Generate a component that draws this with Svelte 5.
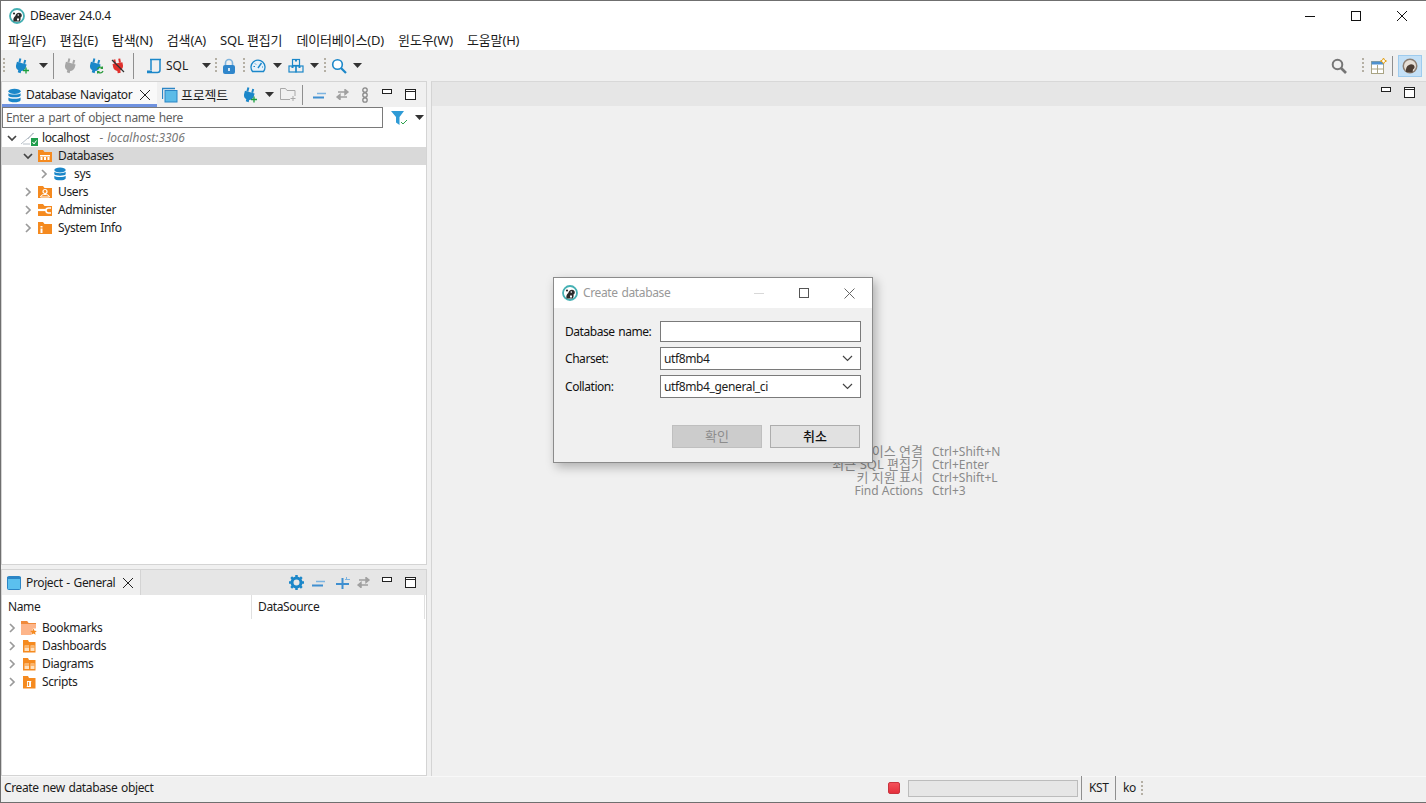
<script>
  const menus = ['파일(F)', '편집(E)', '탐색(N)', '검색(A)', 'SQL 편집기', '데이터베이스(D)', '윈도우(W)', '도움말(H)'];
  const hints = [
    { label: '새 데이터베이스 연결', key: 'Ctrl+Shift+N', latin: false },
    { label: '최근 SQL 편집기', key: 'Ctrl+Enter', latin: false },
    { label: '키 지원 표시', key: 'Ctrl+Shift+L', latin: false },
    { label: 'Find Actions', key: 'Ctrl+3', latin: true }
  ];
</script>

{#snippet chev(open)}
  <svg class="chev" width="10" height="10" viewBox="0 0 10 10">
    {#if open}
      <path d="M1 3l4 4 4-4" fill="none" stroke="#444" stroke-width="1.7" />
    {:else}
      <path d="M3 1l4 4-4 4" fill="none" stroke="#9a9a9a" stroke-width="1.7" />
    {/if}
  </svg>
{/snippet}

{#snippet arrow()}
  <svg class="arrow" width="9" height="5" viewBox="0 0 9 5"><path d="M0 0h9L4.500 5z" fill="#333" /></svg>
{/snippet}

{#snippet logo(size)}
  <svg width={size} height={size} viewBox="0 0 16 16">
    <circle cx="8" cy="8" r="7" fill="#fff" stroke="#45b0b3" stroke-width="1.800" />
    <path d="M4.500 13.500c-.5-2.500.2-4.500 1.800-5.500.3-1.700 1.700-3.200 3.700-3.200 1.600 0 2.800 1.100 2.800 2.700 0 1-.6 1.800-1.300 2 .3 1.500 0 2.900-.8 4z" fill="#2b2b2b" />
    <circle cx="5" cy="5.500" r="1.100" fill="#2b2b2b" />
    <circle cx="9.300" cy="7" r=".8" fill="#fff" />
    <path d="M8 10.500h2v2H8z" fill="#fff" />
  </svg>
{/snippet}

{#snippet plug(color, badge)}
  <svg width="16" height="16" viewBox="0 0 16 16">
    <g transform="rotate(15 7 8)">
      <path d="M4.500 1v4M9.500 1v4" stroke={color} stroke-width="2" />
      <path d="M2 5h10v3.500a5 5 0 0 1-3.500 4.300V15h-3v-2.200A5 5 0 0 1 2 8.500z" fill={color} />
    </g>
    {#if badge === 'plus'}
      <path d="M12 9.500v6M9 12.500h6" stroke="#1b9e3e" stroke-width="1.300" />
    {:else if badge === 'refresh'}
      <path d="M9.500 11a3 3 0 0 1 5-1M15 13a3 3 0 0 1-5 1" fill="none" stroke="#2c9c3f" stroke-width="1.300" />
      <path d="M15 8v3h-3zM9 16v-3h3z" fill="#2c9c3f" />
    {/if}
  </svg>
{/snippet}

{#snippet db(w)}
  <svg width={w} height={w} viewBox="0 0 16 16">
    <g fill="#1b87c9">
      <ellipse cx="8" cy="3.500" rx="6.500" ry="2.800" />
      <path d="M1.500 5.500c1 2 12 2 13 0v2.800c-1 2.200-12 2.200-13 0z" />
      <path d="M1.500 10c1 2 12 2 13 0v3c-1 3-12 3-13 0z" />
    </g>
  </svg>
{/snippet}

{#snippet minmax()}
  <span class="mm">
    <svg width="10" height="6" viewBox="0 0 10 6"><rect x=".5" y=".5" width="9" height="4" fill="#fff" stroke="#222" /></svg>
    <svg width="11" height="11" viewBox="0 0 11 11"><rect x=".5" y=".5" width="10" height="10" fill="#fff" stroke="#222" /><path d="M0 2.500h11" stroke="#222" /></svg>
  </span>
{/snippet}

{#snippet collapse()}
  <svg width="14" height="8" viewBox="0 0 14 8"><path d="M0 6.500h11" stroke="#3f8fd0" stroke-width="2" /><path d="M4 2.500h9" stroke="#7db4e0" stroke-width="1.500" /></svg>
{/snippet}

{#snippet linked()}
  <svg width="15" height="11" viewBox="0 0 15 11"><path d="M3 3h10M13 3l-3-2.500v5zM12 8H2M2 8l3-2.500v5z" fill="#a0a0a0" stroke="#a0a0a0" stroke-width="1.400" /></svg>
{/snippet}

{#snippet folder(kind)}
  <svg width="16" height="16" viewBox="0 0 16 16">
    <path d="M1 2h5l1.500 2H15v10H1z" fill="#f58a1f" />
    {#if kind === 'db'}
      <path d="M3 7h10v1.500H3zM3.500 9h2v3h-2zM7 9h2v3H7zM10.500 9h2v3h-2z" fill="#fff" />
    {:else if kind === 'user'}
      <circle cx="8" cy="7.500" r="2" fill="none" stroke="#fff" stroke-width="1.200" />
      <path d="M3.500 13c.5-2 2-2.500 4.500-2.500s4 .5 4.500 2.500z" fill="none" stroke="#fff" />
    {:else if kind === 'tool'}
      <path d="M1 8h8" stroke="#fff" stroke-width="2.200" />
      <path d="M14 6H11.500a2.500 2.500 0 1 0 0 5H14" fill="none" stroke="#fff" stroke-width="1.600" />
    {:else if kind === 'info'}
      <path d="M3.500 6h2v1.500h-2zM3.500 8.500h2V13h-2z" fill="#fff" />
    {/if}
  </svg>
{/snippet}

{#snippet pfolder(kind)}
  <svg width="16" height="16" viewBox="0 0 16 16">
    {#if kind === 'star'}
      <path d="M0 1h6l1.500 2H15v5.500H12L10 15H0z" fill="#fdb58a" />
      <path d="M0 1h6l1.500 2H15v1H0z" fill="#f08a3c" />
      <path d="M12.500 8.500l1 2.200 2.300.2-1.700 1.500.5 2.300-2.100-1.200-2.100 1.200.5-2.300-1.700-1.500 2.300-.2z" fill="#f58a1f" />
    {:else}
      <path d="M2 2h5l1 2h6.500v10.500H2z" fill="#f58a1f" />
      {#if kind === 'board'}
        <path d="M3.500 7.500h4.500v5.500H3.500zM9.500 7.500H13.500v5.500H9.500z" fill="#ffe0bd" />
        <path d="M3.500 9h4.500M9.500 9h4" stroke="#f58a1f" />
      {:else}
        <path d="M6 7h4.500l-.5 1v5H5.500l.5-1z" fill="#fff" />
        <path d="M7.500 8v4" stroke="#f58a1f" stroke-width="1.200" />
      {/if}
    {/if}
  </svg>
{/snippet}

<div class="app">
  <header class="titlebar">
    <span class="logo">{@render logo(16)}</span>
    <span class="title">DBeaver 24.0.4</span>
    <div class="winbtns">
      <svg width="10" height="10" viewBox="0 0 10 10"><path d="M0 5.500h10" stroke="#111" /></svg>
      <svg width="10" height="10" viewBox="0 0 10 10"><rect x=".5" y=".5" width="9" height="9" fill="none" stroke="#111" /></svg>
      <svg width="10" height="10" viewBox="0 0 10 10"><path d="M0 0l10 10M10 0L0 10" stroke="#111" /></svg>
    </div>
  </header>

  <nav class="menubar">
    {#each menus as m}<span class="menu">{m}</span>{/each}
  </nav>

  <div class="toolbar">
    <span class="grip m2"></span>
    <span class="m9">{@render plug('#1b87c9', 'plus')}</span>
    <span class="m9">{@render arrow()}</span>
    <span class="sep m5"></span>
    <span class="m9">{@render plug('#a6a6a6', '')}</span>
    <span class="m9">{@render plug('#1b87c9', 'refresh')}</span>
    <span class="m6">
      <svg width="16" height="16" viewBox="0 0 16 16">
        <g transform="rotate(-10 8 8)">
          <path d="M5.500 1v4M10.500 1v4" stroke="#e0302c" stroke-width="2" />
          <path d="M3 5h10v3.500a5 5 0 0 1-3.500 4.300V15h-3v-2.200A5 5 0 0 1 3 8.500z" fill="#e0302c" />
        </g>
        <path d="M2 2l12 12" stroke="#333" stroke-width="1.200" />
      </svg>
    </span>
    <span class="sep m7"></span>
    <span class="m12">
      <svg width="16" height="16" viewBox="0 0 16 16"><path d="M4 1.500h11M5 1.500v10.500M14 1.500V12a2.500 2.500 0 0 1-2.500 2.500H1" fill="none" stroke="#1b87c9" stroke-width="1.500" /><path d="M1 12.500h5V15H1z" fill="#1b87c9" /></svg>
    </span>
    <span class="sqltxt">SQL</span>
    <span class="m14">{@render arrow()}</span>
    <span class="grip m4"></span>
    <span class="m4">
      <svg width="16" height="16" viewBox="0 0 16 16"><path d="M4.500 8V5a3.500 3.500 0 0 1 7 0v3" fill="none" stroke="#7fb4dc" stroke-width="1.600" /><rect x="2" y="7" width="12" height="9" rx="2" fill="#2f86cb" /><rect x="7" y="10" width="2" height="3" fill="#d7e9f7" /></svg>
    </span>
    <span class="grip m6"></span>
    <span class="m5">
      <svg width="16" height="16" viewBox="0 0 16 16"><path d="M2.500 13.500a7 7 0 1 1 11 0z" fill="#e6f1fa" stroke="#1b87c9" stroke-width="1.300" /><path d="M8 10l3.500-5" stroke="#1b87c9" stroke-width="1.400" /><path d="M3.500 8.500h1.500M12 9h1M5 5.500l1 1" stroke="#1b87c9" /></svg>
    </span>
    <span class="m7">{@render arrow()}</span>
    <span class="m6">
      <svg width="16" height="16" viewBox="0 0 16 16"><g fill="none" stroke="#1b87c9" stroke-width="1.200"><rect x="4.500" y="1.500" width="7" height="6" /><rect x="1" y="8" width="7" height="6" /><rect x="8" y="8" width="7" height="6" /></g><path d="M7 1.500v2h2v-2M3.500 8v2h2V8M10.500 8v2h2V8" fill="#1b87c9" /></svg>
    </span>
    <span class="m6">{@render arrow()}</span>
    <span class="grip m5"></span>
    <span class="m5">
      <svg width="16" height="16" viewBox="0 0 16 16"><circle cx="6.500" cy="6.500" r="4.800" fill="#fff" stroke="#1b87c9" stroke-width="1.600" /><path d="M10 10l5 5" stroke="#1b87c9" stroke-width="2.200" /></svg>
    </span>
    <span class="m6">{@render arrow()}</span>

    <div class="tb-right">
      <svg width="16" height="16" viewBox="0 0 16 16"><circle cx="6.500" cy="6.500" r="4.800" fill="none" stroke="#757575" stroke-width="2" /><path d="M10 10l5 5" stroke="#757575" stroke-width="2.600" /></svg>
      <span class="grip m15"></span>
      <span class="m7">
        <svg width="16" height="16" viewBox="0 0 16 16"><rect x=".5" y="3.500" width="12" height="12" fill="#fff" stroke="#a9a484" /><rect x=".5" y="3.500" width="12" height="3" fill="#4f91cf" /><path d="M6.500 7v8M1 11h11" stroke="#a9a484" /><path d="M12.500 0l1 2 2 1-2 1-1 2-1-2-2-1 2-1z" fill="#fff" stroke="#e3a21a" /></svg>
      </span>
      <span class="sep short m5"></span>
      <span class="persp">
        <svg width="16" height="16" viewBox="0 0 16 16"><circle cx="8" cy="8" r="7.500" fill="#8d7f73" /><circle cx="8" cy="8" r="6" fill="#e6dfd6" /><path d="M4 14c-.5-3 .5-6 3-7 2-1.500 5-.5 5.500 1.500.4 2-1 2.500-1.500 3l-.5 3z" fill="#4c3d33" /></svg>
      </span>
    </div>
  </div>

  <main class="workspace">
    <section class="left">
      <div class="panel top">
        <div class="tabbar">
          <div class="tab active nav">
            {@render db(15)}
            <span>Database Navigator</span>
            <svg class="x" width="10" height="10" viewBox="0 0 10 10"><path d="M0 0l10 10M10 0L0 10" stroke="#222" /></svg>
          </div>
          <div class="tab other">
            <svg width="16" height="16" viewBox="0 0 16 16"><rect x="3" y="3.500" width="12" height="11.500" fill="#5bbbe8" stroke="#2b85c5" /><path d="M.5 12V1.500H13" fill="none" stroke="#2b85c5" stroke-width="1.300" /></svg>
            <span class="kr">프로젝트</span>
          </div>
          <div class="tabtools">
            <span class="t14">{@render plug('#1b87c9', 'plus')}</span>
            <span class="t7">{@render arrow()}</span>
            <span class="t6">
              <svg width="17" height="15" viewBox="0 0 17 15"><path d="M10 12.500H.5V1.500h5l1.500 2h8V9" fill="none" stroke="#a8a8a8" /><path d="M13 9v5M10.500 11.500h5" stroke="#a8a8a8" /></svg>
            </span>
            <span class="sep short t5"></span>
            <span class="t10">{@render collapse()}</span>
            <span class="t8">{@render linked()}</span>
            <span class="t11">
              <svg class="chain" width="8" height="16" viewBox="0 0 8 16"><g fill="none" stroke="#888" stroke-width="1.300"><circle cx="4" cy="3" r="2.200" /><circle cx="4" cy="8" r="2.200" /><circle cx="4" cy="13" r="2.200" /></g></svg>
            </span>
            <span class="t13">{@render minmax()}</span>
          </div>
        </div>
        <div class="filter">
          <div class="search">Enter a part of object name here</div>
          <svg class="funnel" width="18" height="16" viewBox="0 0 18 16"><path d="M0 1h13L8.500 7v8L5 12.500V7z" fill="#2f9bd6" /><path d="M10 12l2 2 4-4" fill="none" stroke="#2ca24c" /></svg>
          {@render arrow()}
        </div>
        <div class="tree navtree">
          <div class="row l0">
            {@render chev(true)}
            <svg width="18" height="16" viewBox="0 0 18 16"><path d="M0 14L13 3M2 14h7M7 9l5-6" fill="none" stroke="#b8c0c8" /><rect x="10" y="8" width="7" height="8" fill="#1f9d4d" /><path d="M11.500 12l1.500 2 2.500-3.500" fill="none" stroke="#fff" /></svg>
            <span class="lbl host">localhost</span><em>- localhost:3306</em>
          </div>
          <div class="row l1 sel">{@render chev(true)}{@render folder('db')}<span class="lbl">Databases</span></div>
          <div class="row l2">{@render chev(false)}{@render db(14)}<span class="lbl">sys</span></div>
          <div class="row l1">{@render chev(false)}{@render folder('user')}<span class="lbl">Users</span></div>
          <div class="row l1">{@render chev(false)}{@render folder('tool')}<span class="lbl">Administer</span></div>
          <div class="row l1">{@render chev(false)}{@render folder('info')}<span class="lbl">System Info</span></div>
        </div>
      </div>

      <div class="panel bottom">
        <div class="tabbar gray">
          <div class="tab active proj">
            <svg width="14" height="14" viewBox="0 0 14 14"><rect x=".5" y=".5" width="13" height="13" rx="1" fill="#5bc0ee" stroke="#2b85c5" /><path d="M0 2h14" stroke="#2b85c5" stroke-width="2" /></svg>
            <span>Project - General</span>
            <svg class="x" width="10" height="10" viewBox="0 0 10 10"><path d="M0 0l10 10M10 0L0 10" stroke="#222" /></svg>
          </div>
          <div class="tabtools end">
            <svg width="15" height="15" viewBox="0 0 15 15"><circle cx="7.500" cy="7.500" r="4.500" fill="none" stroke="#1b87c9" stroke-width="3" /><path d="M7.500 0v15M0 7.500h15M2.200 2.200l10.600 10.600M12.800 2.200L2.200 12.800" stroke="#1b87c9" stroke-width="2.500" stroke-dasharray="3 9" /></svg>
            <span class="t8">{@render collapse()}</span>
            <span class="t10">
              <svg width="14" height="14" viewBox="0 0 14 14"><path d="M0 8h13M6.500 2v11" stroke="#3f8fd0" stroke-width="2" /><path d="M9 3.500h5M10.500 1v3" stroke="#7db4e0" /></svg>
            </span>
            <span class="t6">{@render linked()}</span>
            <span class="t11">{@render minmax()}</span>
          </div>
        </div>
        <div class="thead">
          <div class="th name">Name</div>
          <div class="th source">DataSource</div>
        </div>
        <div class="tree ptree">
          <div class="row l0">{@render chev(false)}{@render pfolder('star')}<span class="lbl">Bookmarks</span></div>
          <div class="row l0">{@render chev(false)}{@render pfolder('board')}<span class="lbl">Dashboards</span></div>
          <div class="row l0">{@render chev(false)}{@render pfolder('board')}<span class="lbl">Diagrams</span></div>
          <div class="row l0">{@render chev(false)}{@render pfolder('script')}<span class="lbl">Scripts</span></div>
        </div>
      </div>
    </section>

    <section class="editor">
      <div class="edhead">{@render minmax()}</div>
      <div class="hints">
        {#each hints as h}
          <span class="hl" class:latin={h.latin}>{h.label}</span><span class="hk">{h.key}</span>
        {/each}
      </div>
    </section>
  </main>

  <footer class="statusbar">
    <span class="stmsg">Create new database object</span>
    <span class="stop"></span>
    <span class="progress"></span>
    <span class="sep st"></span>
    <span class="kst">KST</span>
    <span class="sep st"></span>
    <span class="ko">ko</span>
    <span class="grip stg"></span>
  </footer>

  <div class="dialog">
    <div class="dtitle">
      <span class="logo">{@render logo(16)}</span>
      <span class="dname">Create database</span>
      <div class="dbtns">
        <svg width="10" height="10" viewBox="0 0 10 10"><path d="M0 5.500h10" stroke="#d8d8d8" /></svg>
        <svg width="10" height="10" viewBox="0 0 10 10"><rect x=".5" y=".5" width="9" height="9" fill="none" stroke="#555" /></svg>
        <svg width="11" height="11" viewBox="0 0 11 11"><path d="M.5.500l10 10M10.500.500l-10 10" stroke="#666" /></svg>
      </div>
    </div>
    <div class="dbody">
      <div class="form">
        <label for="dbn">Database name:</label>
        <input id="dbn" class="field" />
        <span class="flabel">Charset:</span>
        <div class="combo"><span>utf8mb4</span><svg width="11" height="7" viewBox="0 0 11 7"><path d="M1 1l4.500 4.500L10 1" fill="none" stroke="#444" stroke-width="1.200" /></svg></div>
        <span class="flabel">Collation:</span>
        <div class="combo"><span>utf8mb4_general_ci</span><svg width="11" height="7" viewBox="0 0 11 7"><path d="M1 1l4.500 4.500L10 1" fill="none" stroke="#444" stroke-width="1.200" /></svg></div>
      </div>
      <div class="buttons">
        <button class="btn off" disabled>확인</button>
        <button class="btn">취소</button>
      </div>
    </div>
  </div>
</div>

<style>
  :global(body) { margin: 0; }
  .app {
    position: relative;
    width: 1426px; height: 803px; box-sizing: border-box;
    display: flex; flex-direction: column; overflow: hidden;
    background: #f0f0f0;
    border-left: 1px solid #6f6f6f; border-top: 1px solid #6f6f6f; border-bottom: 1px solid #6f6f6f;
    font: 12px/16px "Noto Sans", "Noto Sans CJK KR", sans-serif;
    letter-spacing: -.37px; word-spacing: 1px;
    color: #1c1c1c;
  }
  svg { display: block; flex: none; }
  .kr { font-size: 13px; letter-spacing: -.2px; }
  .titlebar { height: 29px; background: #fff; display: flex; align-items: center; flex: none; }
  .titlebar .logo { margin-left: 8px; }
  .title { margin-left: 5px; }
  .winbtns { margin-left: auto; display: flex; gap: 36px; padding-right: 19px; }
  .menubar { height: 20px; box-sizing: border-box; padding: 0 0 1px 7px; background: #fff; display: flex; align-items: center; flex: none; font-size: 13px; letter-spacing: -.15px; word-spacing: 0; }
  .menu { margin-right: 14px; white-space: nowrap; }
  .toolbar { height: 31px; flex: none; display: flex; align-items: center; background: #f0f0f0; }
  .toolbar > span { display: block; }
  .grip { display: block; width: 2px; height: 16px; background: repeating-linear-gradient(#b5b0a5 0 2px, transparent 2px 4px); flex: none; }
  .sep { display: block; width: 1px; height: 26px; background: #8f8f8f; flex: none; }
  .sep.short { height: 20px; }
  .m2 { margin-left: 2px; } .m4 { margin-left: 4px; } .m5 { margin-left: 5px; } .m6 { margin-left: 6px; }
  .m7 { margin-left: 7px; } .m9 { margin-left: 9px; } .m12 { margin-left: 12px; } .m14 { margin-left: 14px; } .m15 { margin-left: 15px; }
  .sqltxt { margin-left: 4px; width: 22px; letter-spacing: 0; }
  .tb-right { margin-left: auto; display: flex; align-items: center; padding-right: 4px; }
  .persp { margin-left: 5px; padding: 2px 3px; background: #c4e0f6; border: 1px solid #9ecbee; display: block; }

  .workspace { flex: 1; display: flex; min-height: 0; }
  .left { width: 426px; flex: none; display: flex; flex-direction: column; gap: 4px; }
  .panel { background: #fff; border: 1px solid #d4d4d4; display: flex; flex-direction: column; box-sizing: border-box; }
  .panel.top { height: 484px; }
  .panel.bottom { height: 207px; }
  .tabbar { height: 25px; background: #f0f0f0; display: flex; flex: none; }
  .tabbar.gray { background: #e6e6e6; }
  .tab { display: flex; align-items: center; height: 100%; box-sizing: border-box; white-space: nowrap; }
  .tab.active { background: #f9f9f9; }
  .tab.nav { width: 155px; flex: none; padding: 4px 0 0 5px; border-bottom: 3px solid #6f92e0; gap: 4px; }
  .tab.nav .x { margin-left: 4px; }
  .tab.other { flex: none; padding-left: 5px; gap: 3px; }
  .tab.proj { width: 139px; flex: none; padding-left: 5px; gap: 5px; background: #f0f0f0; border-right: 1px solid #d4d4d4; }
  .tab.proj .x { margin-left: 3px; }
  .tabtools { display: flex; align-items: center; flex: 1; }
  .tabtools.end { justify-content: flex-end; padding-right: 10px; }
  .t5 { margin-left: 5px; } .t6 { margin-left: 6px; } .t7 { margin-left: 7px; } .t8 { margin-left: 8px; }
  .t10 { margin-left: 10px; } .t11 { margin-left: 11px; } .t13 { margin-left: 13px; } .t14 { margin-left: 14px; }
  .tabtools > span { display: block; }
  .mm { display: flex; align-items: flex-start; gap: 13px; }
  .filter { height: 21px; display: flex; align-items: center; flex: none; }
  .search { width: 381px; height: 21px; box-sizing: border-box; border: 1px solid #7a7a7a; padding-left: 3px; color: #5f5f5f; line-height: 19px; }
  .funnel { margin-left: 8px; margin-right: 6px; }
  .tree { display: flex; flex-direction: column; }
  .navtree { padding-top: 1px; }
  .row { height: 18px; display: flex; align-items: center; flex: none; }
  .row .chev { margin-right: 4px; }
  .l0 { padding-left: 5px; }
  .l1 { padding-left: 21px; }
  .l2 { padding-left: 37px; }
  .row.l2 .lbl { margin-left: 7px; }
  .lbl { margin-left: 5px; }
  .lbl.host { margin-left: 3px; }
  .sel { background: #d9d9d9; }
  em { margin-left: 10px; color: #777; letter-spacing: 0; }
  .thead { height: 24px; display: flex; flex: none; }
  .th { box-sizing: border-box; height: 24px; line-height: 24px; border-right: 1px solid #e0e0e0; padding-left: 6px; }
  .th.name { width: 250px; }
  .th.source { width: 173px; }

  .editor { flex: 1; margin-left: 4px; background: #f0f0f0; border-left: 1px solid #d4d4d4; display: flex; flex-direction: column; border-top: 1px solid #d8d8d8; }
  .edhead { height: 24px; background: #e6e6e6; display: flex; justify-content: flex-end; padding: 5px 11px 0 0; box-sizing: border-box; flex: none; }
  .hints { display: grid; grid-template-columns: 140px auto; column-gap: 9px; justify-content: start; margin: 339px 0 0 351px; line-height: 13px; color: #8a8a8a; letter-spacing: 0; word-spacing: 0; }
  .hl { text-align: right; white-space: nowrap; font-size: 13px; }
  .hl.latin { font-size: 12px; }
  .hk { white-space: nowrap; }

  .statusbar { height: 26px; box-sizing: border-box; padding-bottom: 3px; flex: none; background: #f0f0f0; display: flex; align-items: center; border-top: 1px solid #f8f8f8; }
  .stmsg { margin-left: 3px; width: 884px; flex: none; }
  .stop { width: 10px; height: 10px; background: linear-gradient(#f4515a, #e5303c); border: 1px solid #c9343e; border-radius: 2px; flex: none; }
  .progress { width: 168px; height: 15px; background: #e6e6e6; border: 1px solid #bcbcbc; margin-left: 8px; flex: none; }
  .sep.st { height: 24px; margin-left: 3px; }
  .kst { margin-left: 7px; width: 23px; }
  .ko { margin-left: 7px; width: 18px; }
  .stg { height: 14px; }

  .dialog {
    position: absolute; left: 552px; top: 276px; width: 320px; height: 186px; box-sizing: border-box;
    background: #f0f0f0; border: 1px solid #8b8b8b;
    box-shadow: 3px 4px 10px rgba(0,0,0,.28);
    display: flex; flex-direction: column;
  }
  .dtitle { height: 30px; background: #fff; display: flex; align-items: center; flex: none; }
  .dtitle .logo { margin-left: 8px; }
  .dname { margin-left: 5px; color: #999; }
  .dbtns { margin-left: auto; display: flex; align-items: center; gap: 35px; padding-right: 17px; }
  .dbody { padding: 13px 11px 0 11px; flex: 1; display: flex; flex-direction: column; }
  .form { display: grid; grid-template-columns: 95px 201px; grid-template-rows: 21px 23px 23px; row-gap: 5px; align-items: center; }
  label, .flabel { color: #111; letter-spacing: -.45px; white-space: nowrap; }
  .field { height: 21px; box-sizing: border-box; border: 1px solid #7a7a7a; background: #fff; padding: 0; width: 100%; }
  .combo { height: 23px; box-sizing: border-box; border: 1px solid #7a7a7a; background: #fff; display: flex; align-items: center; justify-content: space-between; padding: 0 7px 0 3px; }
  .buttons { margin-top: 27px; display: flex; justify-content: flex-end; gap: 8px; padding-right: 1px; }
  .btn { width: 90px; height: 23px; box-sizing: border-box; background: #e1e1e1; border: 1px solid #adadad; font: 13px/16px "Noto Sans", "Noto Sans CJK KR", sans-serif; color: #111; padding: 0 0 2px; font-weight: 500; }
  .btn.off { background: #cccccc; border-color: #bfbfbf; color: #8c8c8c; font-weight: 400; }
</style>
